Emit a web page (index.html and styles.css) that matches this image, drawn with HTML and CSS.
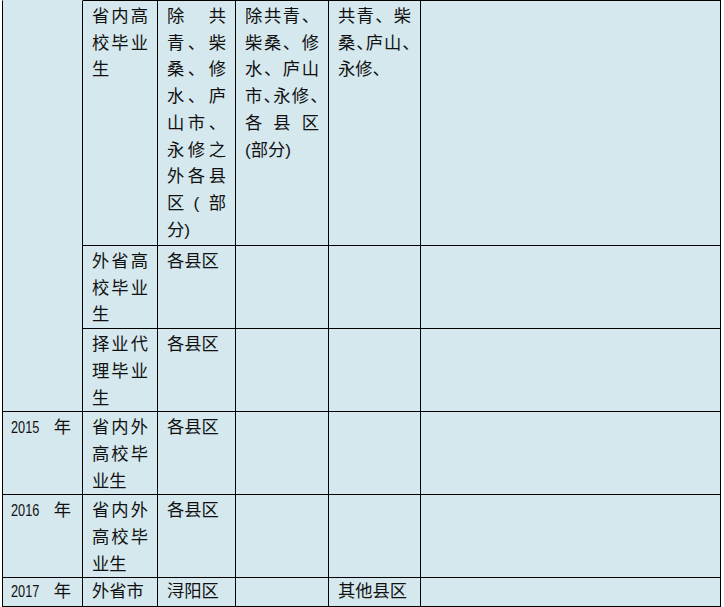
FILE: index.html
```html
<!DOCTYPE html>
<html lang="zh-CN">
<head>
<meta charset="utf-8">
<title>毕业生范围</title>
<link rel="stylesheet" href="styles.css">
</head>
<body>
<table class="grid">
  <colgroup>
    <col class="w-year">
    <col class="w-type">
    <col class="w-area">
    <col class="w-mid">
    <col class="w-mid2">
    <col class="w-rest">
  </colgroup>
  <tbody>
    <tr class="row-top">
      <td class="year cont" rowspan="3"></td>
      <td class="top">
        <span class="ln j">省内高</span>
        <span class="ln j">校毕业</span>
        <span class="ln">生</span>
      </td>
      <td class="top">
        <span class="ln j">除共</span>
        <span class="ln j">青、柴</span>
        <span class="ln j">桑、修</span>
        <span class="ln j">水、庐</span>
        <span class="ln j">山市、</span>
        <span class="ln j">永修之</span>
        <span class="ln j">外各县</span>
        <span class="ln j">区(部</span>
        <span class="ln">分)</span>
      </td>
      <td class="top">
        <span class="ln j">除共青、</span>
        <span class="ln j">柴桑、修</span>
        <span class="ln j">水、庐山</span>
        <span class="ln j">市<span class="cp">、</span>永修<span class="cp">、</span></span>
        <span class="ln j">各县区</span>
        <span class="ln">(部分)</span>
      </td>
      <td class="top">
        <span class="ln j">共青、柴</span>
        <span class="ln j">桑<span class="cp">、</span>庐山<span class="cp">、</span></span>
        <span class="ln">永修、</span>
      </td>
      <td class="top"></td>
    </tr>
    <tr class="row-a">
      <td>
        <span class="ln j">外省高</span>
        <span class="ln j">校毕业</span>
        <span class="ln">生</span>
      </td>
      <td>各县区</td>
      <td></td>
      <td></td>
      <td></td>
    </tr>
    <tr class="row-b">
      <td>
        <span class="ln j">择业代</span>
        <span class="ln j">理毕业</span>
        <span class="ln">生</span>
      </td>
      <td>各县区</td>
      <td></td>
      <td></td>
      <td></td>
    </tr>
    <tr class="row-a">
      <td class="year"><span class="num">2015</span> 年</td>
      <td>
        <span class="ln j">省内外</span>
        <span class="ln j">高校毕</span>
        <span class="ln">业生</span>
      </td>
      <td>各县区</td>
      <td></td>
      <td></td>
      <td></td>
    </tr>
    <tr class="row-b">
      <td class="year"><span class="num">2016</span> 年</td>
      <td>
        <span class="ln j">省内外</span>
        <span class="ln j">高校毕</span>
        <span class="ln">业生</span>
      </td>
      <td>各县区</td>
      <td></td>
      <td></td>
      <td></td>
    </tr>
    <tr class="row-last">
      <td class="year"><span class="num">2017</span> 年</td>
      <td>外省市</td>
      <td>浔阳区</td>
      <td></td>
      <td>其他县区</td>
      <td></td>
    </tr>
  </tbody>
</table>
</body>
</html>
```
FILE: styles.css
```css
html, body {
  margin: 0;
  padding: 0;
  background: #ffffff;
}

.grid {
  margin-left: 2px;
  width: 719px;
  table-layout: fixed;
  border-collapse: separate;
  border-spacing: 0;
  background: #d5e8ee;
}

.w-year { width: 81px; }
.w-type { width: 75px; }
.w-area { width: 78px; }
.w-mid  { width: 93px; }
.w-mid2 { width: 92px; }
.w-rest { width: 300px; }

.grid td {
  box-sizing: border-box;
  vertical-align: top;
  padding: 2px 9px 0;
  border-right: 1px solid #000;
  border-bottom: 1px solid #000;
  font-family: "Liberation Sans", "Noto Sans CJK SC", sans-serif;
  font-size: 17.3px;
  line-height: 26.7px;
  color: #111;
  background: #d5e8ee;
  overflow: hidden;
  white-space: nowrap;
}

.grid td.top {
  border-top: 1px solid #000;
}

.grid td.year {
  border-left: 1px solid #000;
  padding-left: 8px;
}

.grid td.cont {
  border-top: 1px solid transparent;
}

.row-top  { height: 246px; }
.row-a    { height: 83px; }
.row-b    { height: 82px; }
.row-last { height: 28px; }

.row-last td {
  padding-top: 0;
}

.ln {
  display: block;
  text-align: left;
}

.ln.j {
  text-align: justify;
  text-align-last: justify;
  text-justify: inter-character;
}

.cp {
  letter-spacing: -0.5em;
}

.num {
  display: inline-block;
  font-family: "Liberation Sans", sans-serif;
  font-size: 17px;
  transform: scaleX(0.75);
  transform-origin: left center;
  margin-right: 0;
}
```
